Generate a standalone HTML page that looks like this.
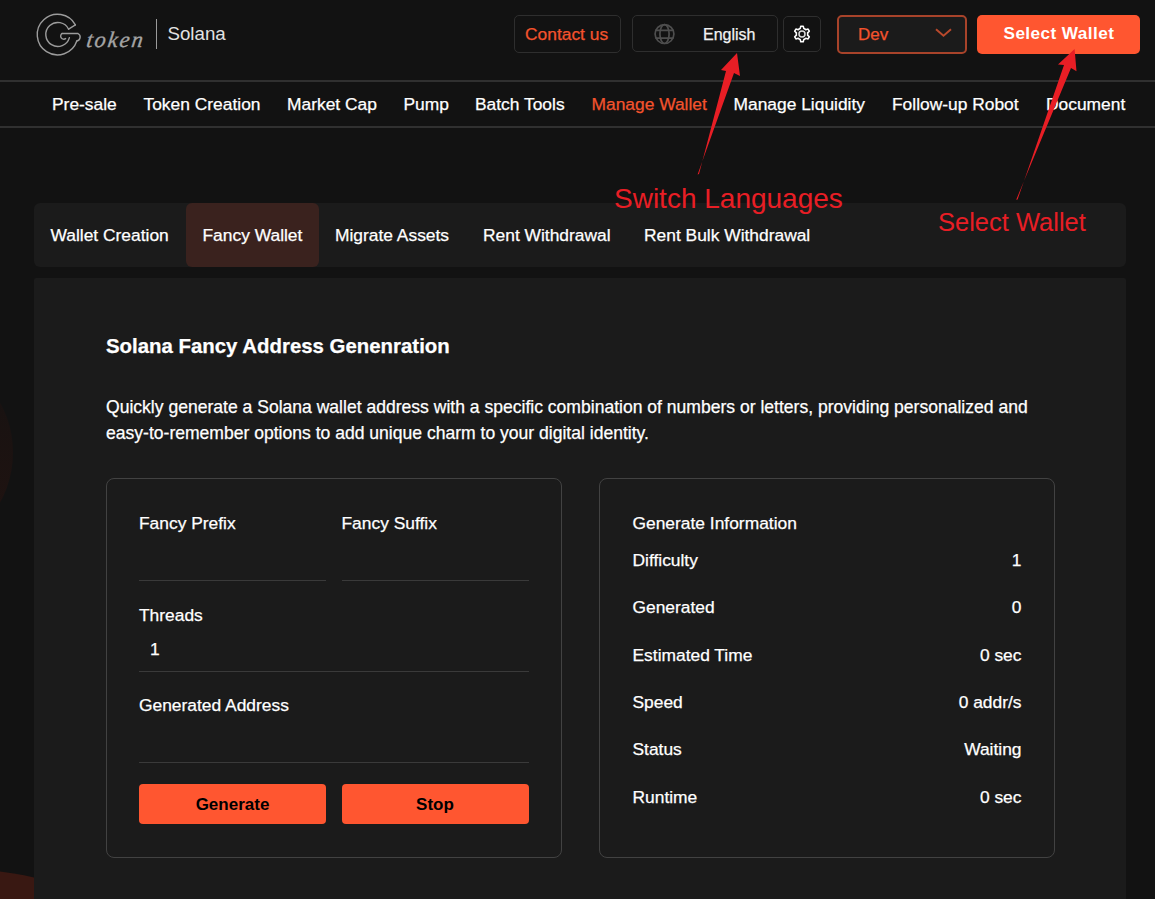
<!DOCTYPE html>
<html><head><meta charset="utf-8">
<style>
*{box-sizing:border-box;margin:0;padding:0}
html,body{width:1155px;height:899px;overflow:hidden;background:#121212}
body{position:relative;font-family:"Liberation Sans",sans-serif;color:#fff}
.t{position:absolute;line-height:1;white-space:nowrap;-webkit-text-stroke-width:0.25px}
.box{position:absolute}
.hline{position:absolute;left:0;width:1155px;height:2px;background:#303030}
.nav{font-size:17.4px;color:#fff}
.tab{font-size:17.4px;color:#fff}
.lbl{font-size:17.4px;color:#fff}
.uline{position:absolute;height:1px;background:#3a3a3a}
.btn{position:absolute;background:#ff5630;border-radius:4px;height:40px;top:784px;padding-top:1.5px;font-weight:700;font-size:17px;color:#000;display:flex;align-items:center;justify-content:center}
.ann{position:absolute;color:#e81e25;white-space:nowrap;line-height:1}
</style></head>
<body>
<!-- faint background glow -->
<div class="box" style="left:-150px;top:360px;width:163px;height:185px;border-radius:50%;background:linear-gradient(180deg,rgba(45,18,14,0.15),rgba(55,20,14,0.35) 85%,rgba(55,20,14,0.2))"></div>
<div class="box" style="left:-368px;top:869px;width:656px;height:656px;border-radius:50%;background:#391812"></div>

<!-- header -->
<svg class="box" style="left:32px;top:8px" width="60" height="52" viewBox="0 0 60 52">
  <g fill="none" stroke="#9c9c9c" stroke-width="1.4" stroke-linecap="round">
    <path d="M43.4 16.9 A20.3 20.3 0 1 0 44.8 33.0"/>
    <path d="M36.6 21.2 A12 12 0 1 0 37.4 29.6"/>
    <path d="M36.6 21.2 L43.4 16.9"/>
    <path d="M30 25.5 L46 25.5 A4 4 0 0 1 44.8 33.0"/>
    <path d="M30 25.5 A2.7 2.7 0 0 0 33.6 30.6"/>
  </g>
</svg>
<div class="t" style="left:85px;top:29px;font-family:'Liberation Serif',serif;font-style:italic;font-size:22.5px;letter-spacing:1.9px;color:#a4a4a4;-webkit-text-stroke:0.35px #a4a4a4;transform:skewX(-8deg);transform-origin:0 100%">token</div>
<div class="box" style="left:155.5px;top:19px;width:1.5px;height:30px;background:#9a9a9a"></div>
<div class="t" style="left:167.5px;top:25.3px;font-size:18.7px;color:#e2e2e2;-webkit-text-stroke-width:0">Solana</div>

<div class="box" style="left:514px;top:15px;width:107px;height:38px;border:1.5px solid #2e2e2e;border-radius:5px"></div>
<div class="t" style="left:525px;top:26px;font-size:17.4px;color:#f4532d">Contact us</div>

<div class="box" style="left:632px;top:15px;width:146px;height:37px;border:1.5px solid #2e2e2e;border-radius:5px"></div>
<svg class="box" style="left:653px;top:23px" width="23" height="23" viewBox="0 0 23 23">
  <g fill="none" stroke="#4e4e4e" stroke-width="1.7">
    <circle cx="11.5" cy="11.1" r="9.4"/>
    <ellipse cx="11.5" cy="11.1" rx="4.6" ry="9.4"/>
    <path d="M2.5 7.3 H20.5 M2.5 15.1 H20.5"/>
  </g>
</svg>
<div class="t" style="left:703px;top:27px;font-size:16px;color:#f2f2f2;-webkit-text-stroke:0.25px #f2f2f2">English</div>

<div class="box" style="left:783px;top:16px;width:38px;height:36px;border:1.5px solid #2e2e2e;border-radius:5px"></div>
<svg class="box" style="left:790.2px;top:21.8px" width="24" height="24" viewBox="0 0 24 24">
  <path fill="none" stroke="#fff" stroke-width="1.6" stroke-linejoin="round" d="M10.14 6.61 L10.78 4.30 L13.22 4.30 L13.86 6.61 A5.70 5.70 0 0 1 15.74 7.70 L18.06 7.09 L19.28 9.20 L17.60 10.91 A5.70 5.70 0 0 1 17.60 13.09 L19.28 14.80 L18.06 16.91 L15.74 16.30 A5.70 5.70 0 0 1 13.86 17.39 L13.22 19.70 L10.78 19.70 L10.14 17.39 A5.70 5.70 0 0 1 8.26 16.30 L5.94 16.91 L4.72 14.80 L6.40 13.09 A5.70 5.70 0 0 1 6.40 10.91 L4.72 9.20 L5.94 7.09 L8.26 7.70 A5.70 5.70 0 0 1 10.14 6.61 Z"/>
  <circle cx="12" cy="12" r="3" fill="none" stroke="#ddd" stroke-width="1.5"/>
</svg>

<div class="box" style="left:837px;top:14.5px;width:130px;height:39px;border:2px solid #a8432a;border-radius:5px;background:#1b1b1b"></div>
<div class="t" style="left:858px;top:26px;font-size:17px;color:#f4532d">Dev</div>
<svg class="box" style="left:934px;top:27px" width="19" height="11" viewBox="0 0 19 11">
  <path d="M2 2.2 L9.5 8.8 L17 2.2" fill="none" stroke="#b9492c" stroke-width="1.9"/>
</svg>

<div class="box" style="left:977px;top:14.5px;width:163px;height:39px;background:#ff5630;border-radius:5px"></div>
<div class="t" style="left:1003.5px;top:25.2px;font-size:17.2px;font-weight:700;letter-spacing:0.42px;color:#fff;-webkit-text-stroke-width:0">Select Wallet</div>

<div class="hline" style="top:80px"></div>
<div class="t nav" style="left:52px;top:95.5px">Pre-sale</div>
<div class="t nav" style="left:143.5px;top:95.5px">Token Creation</div>
<div class="t nav" style="left:287px;top:95.5px">Market Cap</div>
<div class="t nav" style="left:403.5px;top:95.5px">Pump</div>
<div class="t nav" style="left:475px;top:95.5px">Batch Tools</div>
<div class="t nav" style="left:591.5px;top:95.5px;color:#f4532d">Manage Wallet</div>
<div class="t nav" style="left:733.5px;top:95.5px">Manage Liquidity</div>
<div class="t nav" style="left:892px;top:95.5px">Follow-up Robot</div>
<div class="t nav" style="left:1046px;top:95.5px">Document</div>
<div class="hline" style="top:126px"></div>

<!-- tabs -->
<div class="box" style="left:34px;top:202.5px;width:1092px;height:64px;background:#1b1b1b;border-radius:6px"></div>
<div class="box" style="left:185.7px;top:202.5px;width:133.3px;height:64px;background:#3a221e;border-radius:6px"></div>
<div class="t tab" style="left:50.5px;top:226.5px">Wallet Creation</div>
<div class="t tab" style="left:202.5px;top:226.5px">Fancy Wallet</div>
<div class="t tab" style="left:335px;top:226.5px">Migrate Assets</div>
<div class="t tab" style="left:483px;top:226.5px">Rent Withdrawal</div>
<div class="t tab" style="left:644px;top:226.5px">Rent Bulk Withdrawal</div>

<!-- main panel -->
<div class="box" style="left:34px;top:278px;width:1092px;height:640px;background:#1b1b1b;border-radius:2px 2px 0 0"></div>
<div class="t" style="left:106px;top:336px;font-size:20.4px;font-weight:700">Solana Fancy Address Genenration</div>
<div class="t" style="left:106px;top:395.2px;font-size:17.56px;line-height:25.5px;white-space:normal;width:960px">Quickly generate a Solana wallet address with a specific combination of numbers or letters, providing personalized and<br>easy-to-remember options to add unique charm to your digital identity.</div>

<!-- left card -->
<div class="box" style="left:106px;top:478.3px;width:455.5px;height:379.5px;border:1.3px solid #424242;border-radius:8px"></div>
<div class="t lbl" style="left:139px;top:515px">Fancy Prefix</div>
<div class="t lbl" style="left:341.5px;top:515px">Fancy Suffix</div>
<div class="uline" style="left:139px;top:579.5px;width:187px"></div>
<div class="uline" style="left:341.5px;top:579.5px;width:187px"></div>
<div class="t lbl" style="left:139px;top:606.5px">Threads</div>
<div class="t lbl" style="left:150px;top:641px">1</div>
<div class="uline" style="left:139px;top:671px;width:389.5px"></div>
<div class="t lbl" style="left:139px;top:697px">Generated Address</div>
<div class="uline" style="left:139px;top:762px;width:389.5px"></div>
<div class="btn" style="left:139px;width:187px">Generate</div>
<div class="btn" style="left:341.5px;width:187px">Stop</div>

<!-- right card -->
<div class="box" style="left:599.3px;top:478.3px;width:456px;height:379.5px;border:1.3px solid #424242;border-radius:8px"></div>
<div class="t lbl" style="left:632.5px;top:515px">Generate Information</div>
<div class="t lbl" style="left:632.5px;top:551.5px">Difficulty</div>
<div class="t lbl" style="left:632.5px;top:599px">Generated</div>
<div class="t lbl" style="left:632.5px;top:646.5px">Estimated Time</div>
<div class="t lbl" style="left:632.5px;top:694px">Speed</div>
<div class="t lbl" style="left:632.5px;top:741px">Status</div>
<div class="t lbl" style="left:632.5px;top:788.5px">Runtime</div>
<div class="t lbl" style="right:133.5px;top:551.5px">1</div>
<div class="t lbl" style="right:133.5px;top:599px">0</div>
<div class="t lbl" style="right:133.5px;top:646.5px">0 sec</div>
<div class="t lbl" style="right:133.5px;top:694px">0 addr/s</div>
<div class="t lbl" style="right:133.5px;top:741px">Waiting</div>
<div class="t lbl" style="right:133.5px;top:788.5px">0 sec</div>

<!-- annotations -->
<svg class="box" style="left:0;top:0" width="1155" height="260" viewBox="0 0 1155 260">
  <polygon fill="#e81e25" points="697.6,174.5 699,174 726,71 721,70 737,53 740,76 734,73"/>
  <polygon fill="#e81e25" points="1016.2,199.8 1017.6,199.5 1064,65 1058,64.6 1074.6,49 1076.5,71.2 1071,68"/>
</svg>
<div class="ann" style="left:614px;top:184.5px;font-size:28px">Switch Languages</div>
<div class="ann" style="left:938px;top:210px;font-size:25.5px">Select Wallet</div>
</body></html>
